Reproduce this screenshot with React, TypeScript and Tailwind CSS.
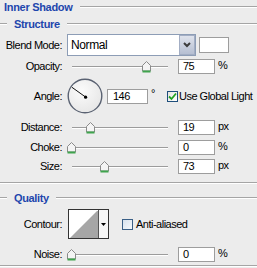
import React from "react";

function Etch({ className = "" }: { className?: string }) {
  return <div className={"h-[2px] border-t border-t-[#a5a5a5] border-b border-b-white " + className} />;
}

function Thumb({ left }: { left: number }) {
  return (
    <svg className="absolute top-[1px]" style={{ left }} width="9" height="12" viewBox="0 0 9 12">
      <path d="M0.5 4.5 L4.5 0.5 L8.5 4.5 V10 H0.5 Z" fill="#f4f4f4" stroke="#8a8a8a" strokeWidth="1" />
      <rect x="0.5" y="9.5" width="8" height="2" fill="#3fa34d" />
    </svg>
  );
}

function Slider({ center }: { center: number }) {
  // center = thumb centre in page x; container starts at x=67
  return (
    <div className="relative w-[106px] h-[13px] ml-[5px] shrink-0">
      <div className="absolute left-[5px] right-[5px] top-[6px] h-[2px] border-t border-t-[#9c9c9c] border-b border-b-white" />
      <Thumb left={center - 67 - 4.5} />
    </div>
  );
}

function NumBox({ value, w = "w-[37px]" }: { value: string; w?: string }) {
  return (
    <div className={"h-[15px] bg-white border border-[#9d9d9d] pl-[4px] leading-[13px] shrink-0 " + w}>{value}</div>
  );
}

function Label({ text }: { text: string }) {
  return <div className="w-[62px] text-right shrink-0 leading-[13px]">{text}</div>;
}

function ValueWithUnit({ value, unit }: { value: string; unit: string }) {
  return (
    <div className="flex items-start ml-[5px]">
      <NumBox value={value} />
      <span className="ml-[3px] leading-[13px]">{unit}</span>
    </div>
  );
}

function SliderRow({ label, center, value, unit, h }: { label: string; center: number; value: string; unit: string; h: string }) {
  return (
    <div className={"flex items-center " + h}>
      <Label text={label} />
      <Slider center={center} />
      <ValueWithUnit value={value} unit={unit} />
    </div>
  );
}

export default function App() {
  return (
    <div className="w-[257px] h-[268px] overflow-hidden bg-[#ececec] text-black text-[11px] tracking-[-0.5px] font-['Liberation_Sans',Arial,sans-serif]">
      {/* Inner Shadow header */}
      <div className="flex items-center h-[14px]">
        <span className="ml-[4px] font-bold text-[#1e46ad] tracking-[-0.3px] leading-[14px]">Inner Shadow</span>
        <Etch className="flex-1 ml-[7px]" />
      </div>
      {/* Structure header */}
      <div className="flex items-center h-[19px]">
        <Etch className="w-[7px]" />
        <span className="ml-[7px] font-bold text-[#1e46ad] tracking-[-0.35px] leading-[14px]">Structure</span>
        <Etch className="flex-1 ml-[7px]" />
      </div>
      {/* Blend mode */}
      <div className="flex items-center h-[24px]">
        <Label text="Blend Mode:" />
        <div className="ml-[5px] w-[129px] h-[22px] bg-white border border-[#8d9db6] flex items-stretch shrink-0">
          <div className="flex-1 pl-[3px] flex items-center text-[12px] tracking-[-0.4px]">Normal</div>
          <div className="w-[16px] bg-gradient-to-b from-[#dfe3ec] to-[#b6bfd2] border border-[#a3aec4] flex items-center justify-center">
            <svg width="8" height="6" viewBox="0 0 8 6">
              <path d="M1 1 L4 4 L7 1" fill="none" stroke="#3c3c3c" strokeWidth="2" />
            </svg>
          </div>
        </div>
        <div className="ml-[3px] w-[30px] h-[16px] bg-white border border-[#9d9d9d] shrink-0" />
      </div>
      {/* Opacity */}
      <SliderRow label="Opacity:" center={146} value="75" unit="%" h="h-[19px]" />
      {/* Angle */}
      <div className="flex items-center h-[40px]">
        <Label text="Angle:" />
        <svg className="ml-[5px] shrink-0" width="36" height="36" viewBox="0 0 36 36">
          <defs>
            <radialGradient id="dial" cx="40%" cy="35%" r="70%">
              <stop offset="0%" stopColor="#fbfbfb" />
              <stop offset="100%" stopColor="#e6e6e6" />
            </radialGradient>
          </defs>
          <circle cx="18" cy="18" r="16.8" fill="url(#dial)" stroke="#5a6272" strokeWidth="1.4" />
          <line x1="18.5" y1="19" x2="4.8" y2="9.2" stroke="#111" strokeWidth="1" />
          <circle cx="18.6" cy="19.2" r="1.6" fill="#000" />
        </svg>
        <div className="ml-[4px] flex items-start">
          <div className="w-[41px] h-[15px] bg-white border border-[#9d9d9d] pl-[5px] leading-[13px]">146</div>
          <span className="ml-[3px] w-[6px] leading-[9px]">°</span>
        </div>
        <div className="ml-[10px] w-[11px] h-[11px] border border-[#1f4f7c] bg-gradient-to-br from-[#e6e6e0] to-white flex items-center justify-center shrink-0">
          <svg width="9" height="9" viewBox="0 0 9 9">
            <path d="M1 4.5 L3.5 7 L8 1.5" fill="none" stroke="#22a322" strokeWidth="1.8" />
          </svg>
        </div>
        <span className="ml-[1px] leading-[13px] whitespace-nowrap">Use Global Light</span>
      </div>
      {/* Distance / Choke / Size */}
      <SliderRow label="Distance:" center={90.5} value="19" unit="px" h="h-[22px]" />
      <SliderRow label="Choke:" center={71.5} value="0" unit="%" h="h-[18px]" />
      <SliderRow label="Size:" center={104.5} value="73" unit="px" h="h-[21px]" />
      <Etch className="mt-[5px]" />
      {/* Quality header */}
      <div className="flex items-center h-[15px] mt-[6px]">
        <Etch className="w-[7px]" />
        <span className="ml-[7px] font-bold text-[#1e46ad] tracking-[-0.35px] leading-[14px]">Quality</span>
        <Etch className="flex-1 ml-[7px]" />
      </div>
      {/* Contour */}
      <div className="flex items-center h-[30px] mt-[4px]">
        <Label text="Contour:" />
        <div className="ml-[6px] w-[41px] h-[30px] border border-[#333] bg-white flex shrink-0">
          <svg width="29" height="28" viewBox="0 0 29 28" className="shrink-0">
            <path d="M1 28 L28 1 L29 1 L29 28 Z" fill="#a6a6a6" />
          </svg>
          <div className="flex-1 border-l border-[#555] flex items-center justify-center bg-[#f7f7f7]">
            <svg width="5" height="3" viewBox="0 0 5 3">
              <path d="M0 0 H5 L2.5 3 Z" fill="#000" />
            </svg>
          </div>
        </div>
        <div className="ml-[13px] w-[11px] h-[11px] border border-[#3a5f86] bg-gradient-to-br from-[#d7e2ee] to-[#f5f8fb] shrink-0" />
        <span className="ml-[3px] leading-[13px]">Anti-aliased</span>
      </div>
      {/* Noise */}
      <div className="mt-[4px]">
        <SliderRow label="Noise:" center={71.5} value="0" unit="%" h="h-[22px]" />
      </div>
      <Etch />
    </div>
  );
}
